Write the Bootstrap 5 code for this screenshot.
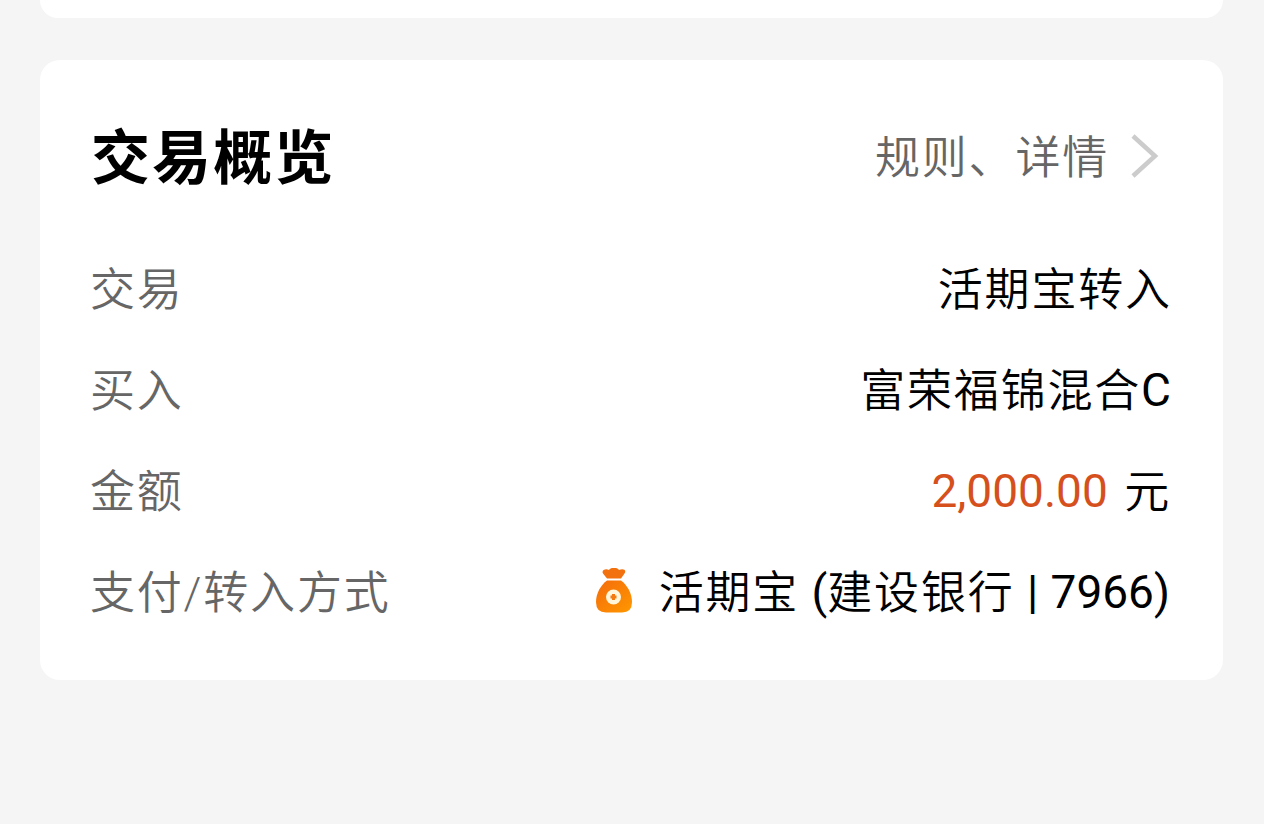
<!DOCTYPE html>
<html lang="zh-CN">
<head>
  <meta charset="UTF-8">
  <meta name="viewport" content="width=device-width, initial-scale=1.0">
  <title>交易概览</title>
  <link href="https://cdn.jsdelivr.net/npm/bootstrap@5.3.0/dist/css/bootstrap.min.css" rel="stylesheet">
  <style>
    body {
      background-color: #f5f5f5;
      font-family: Roboto, "Noto Sans CJK SC", sans-serif;
      font-size: 46px;
      line-height: 66px;
      color: #000;
      overflow: hidden;
    }
    .pagina { padding: 0 41px 0 40px; }
    .painel { border: 0; border-radius: 20px; background-color: #fff; }
    .painel-anterior { height: 18px; border-radius: 0 0 20px 20px; margin-bottom: 42px; }
    .resumo { height: 620px; padding: 64px 52px 0 50px; }
    .titulo { font-size: 59px; line-height: 66px; letter-spacing: 2.1px; padding: 2px 0 0 1px; }
    .detalhes { color: #666; padding-right: 12px; }
    .detalhes .han { padding-top: 2px; }
    .detalhes svg { margin-left: 22px; margin-bottom: 5px; }
    .linhas { margin-top: 66px; gap: 35px; }
    .linha { height: 66px; }
    .rotulo { color: #666; }
    .han { font-size: 45px; letter-spacing: 1.8px; font-weight: 350; }
    .fim { margin-right: -.8px; }
    .latim { font-size: 46px; line-height: 1; letter-spacing: 0; font-weight: 400; vertical-align: 1px; }
    .valor { color: #d5501c; margin-right: 5px; }
    .conta { margin-right: 1px; word-spacing: 1px; }
    .saco { margin: 0 26px 7px 0; }
  </style>
</head>
<body>
  <div class="pagina">
    <div class="card painel painel-anterior"></div>
    <div class="card painel resumo">
      <div class="d-flex justify-content-between align-items-center">
        <h2 class="titulo fw-bold mb-0">交易概览</h2>
        <div class="detalhes d-flex align-items-center">
          <span class="han">规则、详情</span>
          <svg width="28" height="46" viewBox="0 0 28 46" fill="none" stroke="#ccc" stroke-width="4.5"><path d="M2 3 L24 23 L2 43"/></svg>
        </div>
      </div>
      <div class="linhas d-flex flex-column">
        <div class="linha d-flex justify-content-between">
          <span class="rotulo han">交易</span>
          <span class="han fim">活期宝转入</span>
        </div>
        <div class="linha d-flex justify-content-between">
          <span class="rotulo han">买入</span>
          <span class="han">富荣福锦混合<span class="latim">C</span></span>
        </div>
        <div class="linha d-flex justify-content-between">
          <span class="rotulo han">金额</span>
          <span class="han"><span class="latim"><span class="valor">2,000.00</span> </span>元</span>
        </div>
        <div class="linha d-flex justify-content-between">
          <span class="rotulo han">支付/转入方式</span>
          <div class="d-flex align-items-center">
            <svg class="saco" width="38" height="46" viewBox="0 0 38 46">
              <defs>
                <linearGradient id="saco" x1="0" y1="0" x2="1" y2="1">
                  <stop offset="0" stop-color="#f46b0b"/>
                  <stop offset="1" stop-color="#ff9800"/>
                </linearGradient>
              </defs>
              <path fill="#f3700f" d="M12 10.5 L8 5.5 C6 2 11 0 14 2 C16 -1 22 -1 24 2 C28 0 32 2 29.500 5.500 L26 10.500 Z"/>
              <path fill="url(#saco)" d="M12 12.500 H26 C32 17 37 25 37 34 Q37 44.500 27 44.500 H11 Q1 44.500 1 34 C1 25 6 17 12 12.500 Z"/>
              <circle cx="18.5" cy="29" r="7.5" fill="#fff6dc"/>
              <path fill="#f47b10" d="M17 26 H20 V27.500 H21.500 V30.500 H20 V32 H17 V30.500 H15.500 V27.500 H17 Z"/>
            </svg>
            <span class="conta han">活期宝<span class="latim"> (</span>建设银行<span class="latim"> | 7966)</span></span>
          </div>
        </div>
      </div>
    </div>
  </div>
  <script src="https://cdn.jsdelivr.net/npm/bootstrap@5.3.0/dist/js/bootstrap.bundle.min.js"></script>
</body>
</html>
